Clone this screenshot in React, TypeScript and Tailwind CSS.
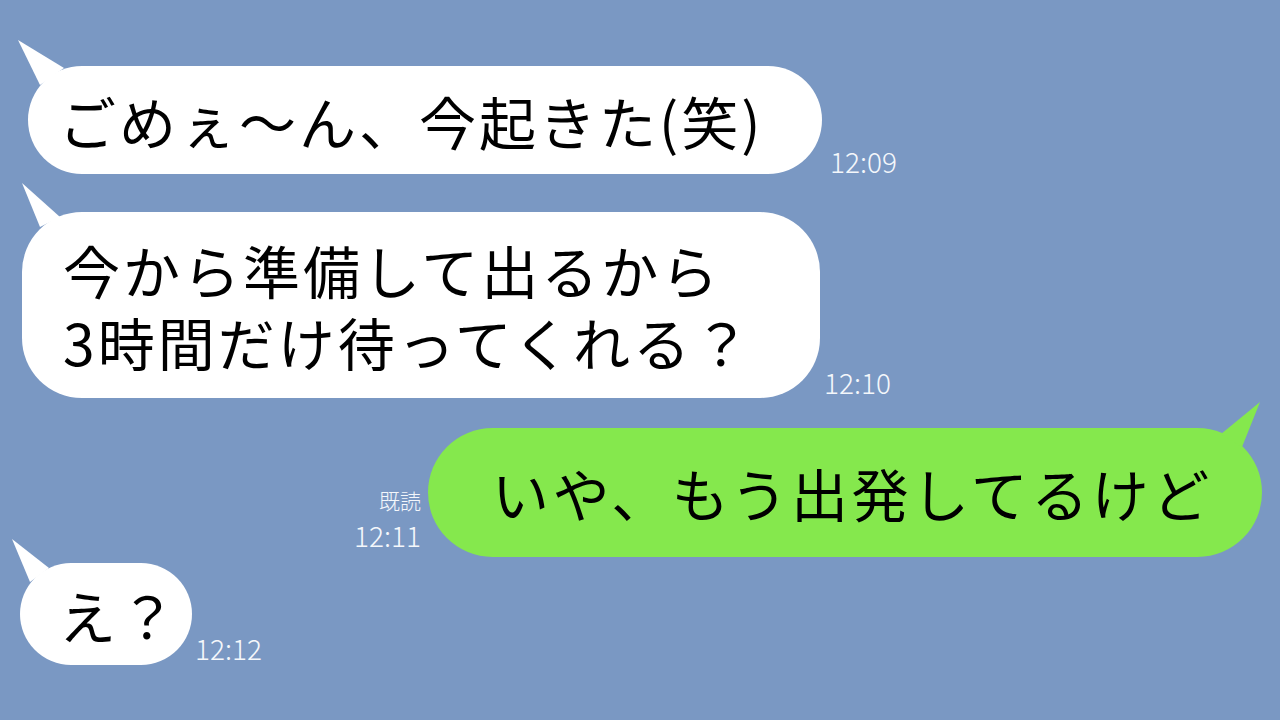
const font = { fontFamily: '"Noto Sans CJK JP", "Noto Sans", sans-serif' };

function LeftTail({ className, points }: { className: string; points: string }) {
  return (
    <svg className={`absolute ${className}`} width="50" height="50" viewBox="0 0 50 50">
      <polygon points={points} fill="#ffffff" />
    </svg>
  );
}

export default function App() {
  return (
    <div
      className="w-[1280px] h-[720px] bg-[#7a98c3] overflow-hidden flex flex-col text-black"
      style={font}
    >
      {/* 1 */}
      <div className="flex items-end mt-[66px] ml-[28px]">
        <div className="relative w-[794px] h-[108px] bg-white rounded-full flex items-center pl-[31px]">
          <LeftTail className="-left-[10px] -top-[26px]" points="0,0 46,28 22,45" />
          <span className="relative text-[57px] leading-none tracking-[3px]">ごめぇ〜ん、今起きた(笑)</span>
        </div>
        <span className="ml-[8px] -mb-[1px] text-[28px] font-light leading-none text-[#f4f7fb]">12:09</span>
      </div>

      {/* 2 */}
      <div className="flex items-end mt-[38px] ml-[22px]">
        <div className="relative w-[798px] h-[186px] bg-white rounded-[60px] flex items-center pl-[41px]">
          <LeftTail className="left-0 -top-[29px]" points="0,0 38,34 18,44" />
          <div className="relative text-[57px] leading-[72px] tracking-[3px]">
            <p>今から準備して出るから</p>
            <p>3時間だけ待ってくれる？</p>
          </div>
        </div>
        <span className="ml-[4px] mb-[2px] text-[28px] font-light leading-none text-[#f4f7fb]">12:10</span>
      </div>

      {/* 3 */}
      <div className="flex items-end justify-end mt-[30px] mr-[18px]">
        <div className="flex flex-col items-end mr-[7px] mb-[8px] text-[#f4f7fb] leading-none font-light">
          <span className="text-[21px] mb-[10px]">既読</span>
          <span className="text-[28px]">12:11</span>
        </div>
        <div className="relative w-[834px] h-[129px] bg-[#85e84d] rounded-full flex items-center pl-[64px]">
          <svg className="absolute left-[792px] -top-[26px]" width="44" height="50" viewBox="0 0 44 50">
            <polygon points="40,0 1,32 22,45" fill="#85e84d" />
          </svg>
          <span className="relative text-[57px] leading-none tracking-[3.5px]">いや、もう出発してるけど</span>
        </div>
      </div>

      {/* 4 */}
      <div className="flex items-end mt-[6px] ml-[20px]">
        <div className="relative w-[172px] h-[102px] bg-white rounded-full flex items-center pl-[39px]">
          <LeftTail className="-left-[8px] -top-[24px]" points="0,0 37,29 18,43" />
          <span className="relative text-[57px] leading-none tracking-[3px]">え？</span>
        </div>
        <span className="ml-[3px] mb-[3px] text-[28px] font-light leading-none text-[#f4f7fb]">12:12</span>
      </div>
    </div>
  );
}
